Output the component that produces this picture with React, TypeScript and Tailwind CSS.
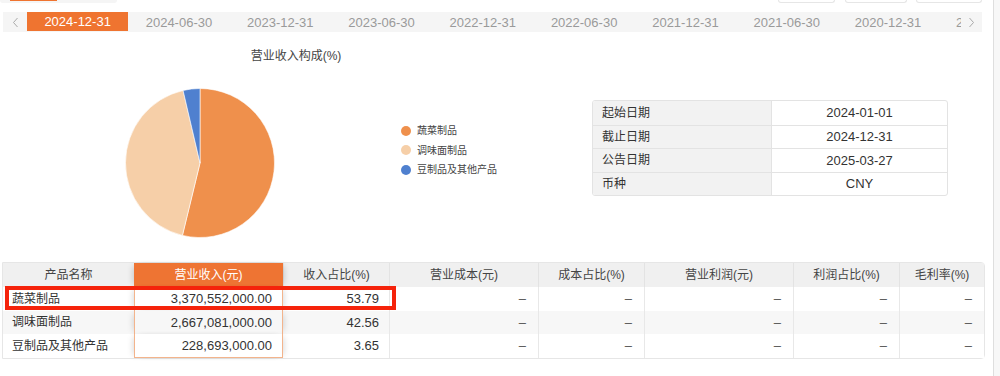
import React from 'react';

const tabs = [
  '2024-12-31', '2024-06-30', '2023-12-31', '2023-06-30', '2022-12-31',
  '2022-06-30', '2021-12-31', '2021-06-30', '2020-12-31', '2020-06-30',
];

const slices = [
  { name: '蔬菜制品', value: 53.79, color: '#ef904c' },
  { name: '调味面制品', value: 42.56, color: '#f6cfa8' },
  { name: '豆制品及其他产品', value: 3.65, color: '#4f80cf' },
];

const info = [
  ['起始日期', '2024-01-01'],
  ['截止日期', '2024-12-31'],
  ['公告日期', '2025-03-27'],
  ['币种', 'CNY'],
];

const headers = ['产品名称', '营业收入(元)', '收入占比(%)', '营业成本(元)', '成本占比(%)', '营业利润(元)', '利润占比(%)', '毛利率(%)'];

const rows = [
  { name: '蔬菜制品', revenue: '3,370,552,000.00', pct: '53.79' },
  { name: '调味面制品', revenue: '2,667,081,000.00', pct: '42.56' },
  { name: '豆制品及其他产品', revenue: '228,693,000.00', pct: '3.65' },
];

const font = { fontFamily: '"Liberation Sans", "Noto Sans CJK SC", sans-serif' };

function Pie() {
  const cx = 75;
  const cy = 75;
  const r = 74.5;
  const total = slices.reduce((s, x) => s + x.value, 0);
  let start = -Math.PI / 2;
  const paths = slices.map((s) => {
    const sweep = (s.value / total) * Math.PI * 2;
    const end = start + sweep;
    const x1 = cx + r * Math.cos(start);
    const y1 = cy + r * Math.sin(start);
    const x2 = cx + r * Math.cos(end);
    const y2 = cy + r * Math.sin(end);
    const large = sweep > Math.PI ? 1 : 0;
    const d = `M${cx} ${cy} L${x1} ${y1} A${r} ${r} 0 ${large} 1 ${x2} ${y2} Z`;
    start = end;
    return <path key={s.name} d={d} fill={s.color} stroke="#fff" strokeWidth={0.6} />;
  });
  return (
    <svg width="150" height="150" viewBox="0 0 150 150" className="shrink-0">
      {paths}
    </svg>
  );
}

export default function App() {
  return (
    <div className="flex w-[1000px] h-[376px] bg-white overflow-hidden text-[#333]" style={font}>
      <div className="w-[993px] flex flex-col">
        {/* cut-off controls above */}
        <div className="relative h-[3px]">
          <div className="absolute left-0 top-0 w-[117px] h-[3px] bg-[#f5f5f5] rounded-b" />
          <div className="absolute left-[10px] top-0 w-[47px] h-[1px] bg-[#ef7430]" />
          <div className="absolute left-[778px] top-0 w-[57px] h-[3px] border border-t-0 border-[#e6e6e6] rounded-b" />
          <div className="absolute left-[845px] top-0 w-[62px] h-[3px] border border-t-0 border-[#e6e6e6] rounded-b" />
          <div className="absolute left-[916px] top-0 w-[66px] h-[3px] border border-t-0 border-[#e6e6e6] rounded-b" />
        </div>

        {/* date tabs */}
        <div className="mt-[9px] ml-[3px] w-[979px] h-5 bg-[#f5f5f5] flex items-center">
          <div className="w-[24px] flex justify-center text-[#aaa]">
            <svg width="7" height="11" viewBox="0 0 7 11"><path d="M5.5 1 L1.5 5.5 L5.5 10" fill="none" stroke="#aaa" strokeWidth="1" /></svg>
          </div>
          <div className="w-[934px] h-5 flex overflow-hidden">
            {tabs.map((t, i) => (
              <div
                key={t}
                className={`w-[101.3px] shrink-0 h-5 flex items-center justify-center text-[13px] leading-none ${i === 0 ? 'bg-[#ef7430] text-white h-[19px] self-start' : 'text-[#9a9a9a]'}`}
              >
                {t}
              </div>
            ))}
          </div>
          <div className="flex-1 flex justify-center">
            <svg width="7" height="11" viewBox="0 0 7 11"><path d="M1.5 1 L5.5 5.5 L1.5 10" fill="none" stroke="#aaa" strokeWidth="1" /></svg>
          </div>
        </div>

        {/* chart + info */}
        <div className="h-[230px] flex">
          <div className="w-[592px] flex flex-col">
            <div className="pt-4 text-center text-[12px] leading-[17px] text-[#444]">营业收入构成(%)</div>
            <div className="flex mt-[23px]">
              <div className="ml-[125px]">
                <Pie />
              </div>
              <div className="ml-[126px] mt-[33px] flex flex-col">
                {slices.map((s) => (
                  <div key={s.name} className="h-[19.5px] flex items-center gap-[6px] text-[10px] text-[#444]">
                    <span className="w-[10px] h-[10px] rounded-full" style={{ background: s.color }} />
                    {s.name}
                  </div>
                ))}
              </div>
            </div>
          </div>
          <div className="mt-[68px] w-[356px] self-start border border-[#e3e3e3] rounded-[3px] overflow-hidden">
            {info.map(([k, v], i) => (
              <div key={k} className={`flex h-[23.5px] ${i > 0 ? 'border-t border-[#e3e3e3]' : ''}`}>
                <div className="w-[178px] bg-[#f2f2f2] pl-[9px] flex items-center text-[12px]">{k}</div>
                <div className="flex-1 flex items-center justify-center text-[13px] border-l border-[#e3e3e3]">{v}</div>
              </div>
            ))}
          </div>
        </div>

        {/* main table */}
        <div className="relative ml-[2px] w-[983px] border border-[#e6e6e6] rounded-r-[4px]">
          <div className="grid grid-cols-[131px_149px_106px_149px_106px_149px_106px_1fr] h-6 bg-[#f0f0f0] text-[12px]">
            {headers.map((h, i) => (
              <div
                key={h}
                className={`flex items-center justify-center ${i === 1 ? 'bg-[#ee7433] text-white relative z-10 shadow-[4px_0_6px_-3px_rgba(0,0,0,0.18),-4px_0_6px_-3px_rgba(0,0,0,0.18)]' : 'text-[#444]'} ${i > 1 ? 'border-l border-[#e3e3e3]' : ''}`}
              >
                {h}
              </div>
            ))}
          </div>
          {rows.map((r, ri) => (
            <div
              key={r.name}
              className={`grid grid-cols-[131px_149px_106px_149px_106px_149px_106px_1fr] h-[23.5px] ${ri === 1 ? 'bg-[#f7f7f7]' : 'bg-white'}`}
            >
              <div className="flex items-center pl-[9px] text-[12px]">{r.name}</div>
              <div
                className={`flex items-center justify-end pr-[10px] text-[13px] relative z-10 border-x border-[#f3b48c] shadow-[4px_0_6px_-3px_rgba(0,0,0,0.15),-4px_0_6px_-3px_rgba(0,0,0,0.15)] ${ri === 2 ? 'border-b' : ''} ${ri === 1 ? 'bg-[#f7f7f7]' : 'bg-white'}`}
              >
                {r.revenue}
              </div>
              <div className="flex items-center justify-end pr-[10px] text-[13px]">{r.pct}</div>
              {[0, 1, 2, 3, 4].map((k) => (
                <div key={k} className="flex items-center justify-end pr-[12px] text-[13px] text-[#555] border-l border-[#e8e8e8]">
                  –
                </div>
              ))}
            </div>
          ))}
          <div className="absolute left-[2px] top-[23px] w-[391px] h-[24px] border-4 border-[#f5230b] z-20 pointer-events-none" />
        </div>
      </div>
      <div className="flex-1 border-l border-[#dedede] bg-[#f7f7f7]" />
    </div>
  );
}
